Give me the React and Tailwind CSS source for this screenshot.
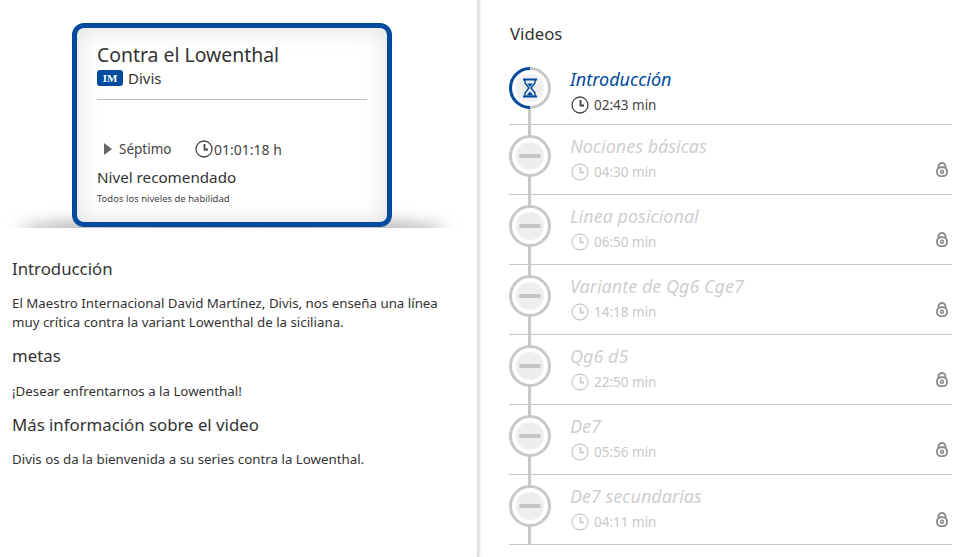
const lessons = [
  { title: "Nociones básicas", time: "04:30 min" },
  { title: "Linea posicional", time: "06:50 min" },
  { title: "Variante de Qg6 Cge7", time: "14:18 min" },
  { title: "Qg6 d5", time: "22:50 min" },
  { title: "De7", time: "05:56 min" },
  { title: "De7 secundarias", time: "04:11 min" },
];

function Clock({ color = "#444", size = 18 }) {
  return (
    <svg width={size} height={size} viewBox="0 0 18 18" fill="none" stroke={color} className="shrink-0">
      <circle cx="9" cy="9" r="8" strokeWidth="1.3" />
      <path d="M9.5 4v5.5H13" strokeWidth="1.8" />
    </svg>
  );
}

function Lock() {
  return (
    <svg width="12" height="15" viewBox="0 0 12 15" fill="none" stroke="#8c8c8c" className="shrink-0">
      <path d="M2.5 6V4a3.5 3 0 0 1 7 0V6" strokeWidth="1.8" />
      <rect x="1" y="5.2" width="10" height="9" rx="4" strokeWidth="1.9" />
      <circle cx="6" cy="9.7" r="1.5" strokeWidth="1.5" />
    </svg>
  );
}

function Hourglass() {
  return (
    <svg width="16" height="20" viewBox="0 0 16 20" fill="none" stroke="#004b9b">
      <path d="M1 1.5h14M1 18.5h14" strokeWidth="2" />
      <path d="M3 2v3l4 5-4 5v3M13 2v3l-4 5 4 5v3" strokeWidth="1.4" />
      <path d="M4.5 17.5 8 13.5l3.5 4z" fill="#004b9b" stroke="none" />
      <path d="M5 5.5h6L8 9z" fill="#004b9b" stroke="none" />
    </svg>
  );
}

function Card() {
  return (
    <div className="relative h-[228px] pt-[23px] overflow-hidden">
      <div className="absolute left-[18px] right-[30px] top-[218px] h-[26px] rounded-[50%] bg-[#b0b0b0] blur-[8px]" />
      <div className="relative ml-[72px] w-[320px] h-[204px] rounded-[12px] border-[5px] border-[#004b9e] bg-white shadow-[inset_0_0_24px_rgba(0,0,0,0.13)] px-[20px] pt-[14px]">
        <div className="text-[19.4px] leading-[26px] text-[#333]">Contra el Lowenthal</div>
        <div className="flex items-center gap-[5px] h-[20px]">
          <span className="w-[26px] h-[16px] rounded-[3px] bg-[#004b9e] text-white text-[11px] font-bold leading-[16px] text-center font-['Liberation_Serif',serif]">IM</span>
          <span className="text-[15px] text-[#333]">Divis</span>
        </div>
        <div className="border-b border-[#bdbdbd] mt-[11px]" />
        <div className="flex items-center h-[20px] mt-[39px] text-[#444] text-[13.5px]">
          <span className="ml-[7px] w-0 h-0 border-y-[6px] border-y-transparent border-l-[8px] border-l-[#666]" />
          <span className="ml-[7px] w-[76px]">Séptimo</span>
          <Clock />
          <span className="ml-[1px] text-[14px]">01:01:18 h</span>
        </div>
        <div className="text-[15.2px] leading-[20px] mt-[8px] text-[#333]">Nivel recomendado</div>
        <div className="text-[9.5px] leading-[14px] mt-[5px] text-[#444]">Todos los niveles de habilidad</div>
      </div>
    </div>
  );
}

function Row({ title, time, active }) {
  return (
    <div className={`relative flex border-b border-[#c8c8c8] ${active ? "h-[69px]" : "h-[70px]"}`}>
      <div className={`absolute left-[19px] w-[3px] bg-[#c8c8c8] ${active ? "top-[50px] bottom-[-1px]" : "top-[-1px] bottom-[-1px]"}`} />
      <div className={`relative shrink-0 w-[42px] h-[42px] ${active ? "mt-[11px]" : "mt-[10px]"}`}>
        <div className="w-full h-full rounded-full border-[3px] border-[#c8c8c8] bg-white flex items-center justify-center">
          <div className="w-[28px] h-[28px] rounded-full bg-[#eeeeee] flex items-center justify-center">
            {active ? <Hourglass /> : <div className="w-[22px] h-[4px] rounded-full bg-[#c4c4c4]" />}
          </div>
        </div>
        {active && (
          <svg className="absolute inset-0" width="42" height="42" viewBox="0 0 42 42" fill="none">
            <path d="M21 1.5A19.5 19.5 0 0 0 21 40.5" stroke="#004b9e" strokeWidth="3" />
          </svg>
        )}
      </div>
      <div className="ml-[19px] flex-1">
        <div className={`italic text-[18px] leading-[24px] ${active ? "mt-[11px] text-[#004b9e]" : "mt-[9px] text-[#cfcfcf]"}`}>{title}</div>
        <div className={`flex items-center gap-[5px] ml-[1px] mt-[4px] text-[13.5px] ${active ? "text-[#444]" : "text-[#c8c8c8]"}`}>
          <Clock color={active ? "#444" : "#cccccc"} />
          <span>{time}</span>
        </div>
      </div>
      {!active && <div className="self-end mb-[17px] mr-[4px]"><Lock /></div>}
    </div>
  );
}

export default function App() {
  return (
    <div className="flex w-[964px] h-[557px] overflow-hidden bg-white font-['Noto_Sans',sans-serif] text-[#333]">
      <div className="w-[477px] shrink-0 border-r-[2px] border-[#e0e0e0] box-content shadow-[1px_0_2px_rgba(0,0,0,0.12)]">
        <Card />
        <div className="px-[12px] text-[13.3px] leading-[19px]">
          <h2 className="text-[16.8px] leading-[22px] mt-[30px]">Introducción</h2>
          <p className="mt-[14px]">El Maestro Internacional David Martínez, Divis, nos enseña una línea<br />muy crítica contra la variant Lowenthal de la siciliana.</p>
          <h2 className="text-[16.8px] leading-[22px] mt-[13px]">metas</h2>
          <p className="mt-[15px]">¡Desear enfrentarnos a la Lowenthal!</p>
          <h2 className="text-[16.8px] leading-[22px] mt-[13px]">Más información sobre el video</h2>
          <p className="mt-[14px]">Divis os da la bienvenida a su series contra la Lowenthal.</p>
        </div>
      </div>
      <div className="flex-1 pl-[30px] pr-[12px]">
        <h2 className="text-[16.8px] leading-[22px] mt-[23px] mb-[11px] ml-[1px]">Videos</h2>
        <Row title="Introducción" time="02:43 min" active />
        {lessons.map((l) => <Row key={l.title} {...l} />)}
      </div>
    </div>
  );
}
